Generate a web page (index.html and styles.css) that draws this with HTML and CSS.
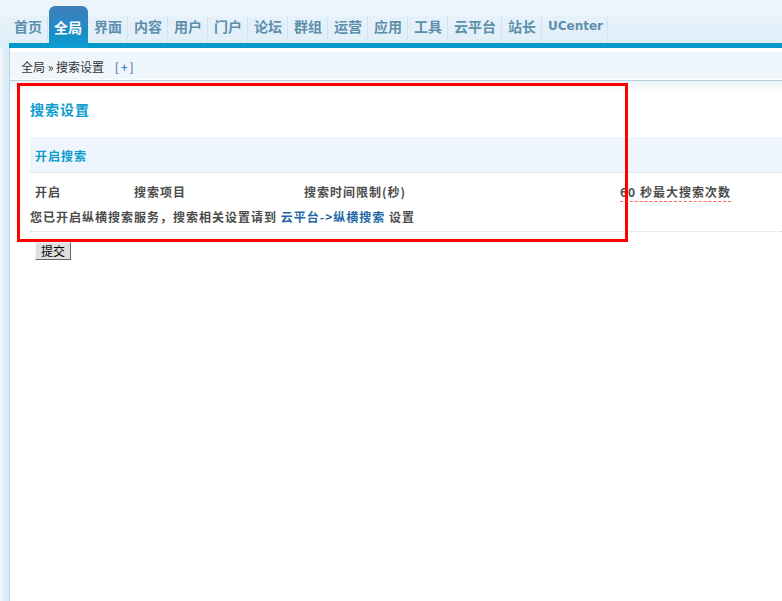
FILE: index.html
```html
<!DOCTYPE html>
<html lang="zh-CN">
<head>
  <meta charset="UTF-8">
  <title>搜索设置</title>
  <link rel="stylesheet" href="styles.css">
</head>
<body>
  <div class="header">
    <ul class="nav">
      <li><a href="#">首页</a></li>
      <li><a href="#" class="on">全局</a></li>
      <li><a href="#">界面</a></li>
      <li><a href="#">内容</a></li>
      <li><a href="#">用户</a></li>
      <li><a href="#">门户</a></li>
      <li><a href="#">论坛</a></li>
      <li><a href="#">群组</a></li>
      <li><a href="#">运营</a></li>
      <li><a href="#">应用</a></li>
      <li><a href="#">工具</a></li>
      <li><a href="#">云平台</a></li>
      <li><a href="#">站长</a></li>
      <li><a href="#" class="latin">UCenter</a></li>
    </ul>
  </div>

  <div class="frame">
    <div class="side"></div>
    <div class="main">
      <div class="crumb">
        全局 &raquo; 搜索设置 <a href="#" class="add">[+]</a>
      </div>

      <div class="content">
        <h3 class="title">搜索设置</h3>

        <div class="tb">
          <div class="tb-head">开启搜索</div>
          <div class="tb-row cols">
            <span>开启</span>
            <span>搜索项目</span>
            <span>搜索时间限制(秒)</span>
            <span><em class="warn">60 秒最大搜索次数</em></span>
          </div>
          <div class="tb-row note">
            您已开启纵横搜索服务，搜索相关设置请到 <a href="#">云平台-&gt;纵横搜索</a> 设置
          </div>
        </div>

        <button class="btn">提交</button>
      </div>

      <!-- 标注框 -->
      <div class="mark"></div>
    </div>
  </div>
</body>
</html>
```

FILE: styles.css
```css
body {
  margin: 0;
  font: 12px "Noto Sans CJK SC", "Liberation Sans", sans-serif;
  color: #333;
  background: #fff;
}

a {
  text-decoration: none;
}

/* 顶部导航 */
.header {
  height: 48px;
  background:
    linear-gradient(#0099cc, #0099cc) 9px 43px / 100% 5px no-repeat,
    linear-gradient(#e0eef8, #e0eef8) 0 43px / 9px 5px no-repeat,
    linear-gradient(#edf5fc 0, #edf5fc 16px, #e6f1fa 17px, #e1eff9 43px);
}

.nav {
  list-style: none;
  margin: 0;
  padding: 0 0 0 8px;
  height: 48px;
  display: flex;
  align-items: flex-end;
}

.nav a {
  display: block;
  height: 21px;
  line-height: 21px;
  padding: 0 5px 6px 6px;
  margin-bottom: 5px;
  border-right: 1px solid #d3e4ef;
  font-size: 14px;
  font-weight: bold;
  color: #5c8fab;
}

.nav a.on {
  height: 31px;
  padding-top: 11px;
  padding-bottom: 0;
  margin-bottom: 0;
  margin-left: 1px;
  padding-left: 5px;
  line-height: 21px;
  border-right-color: transparent;
  color: #fff;
  border-radius: 6px 6px 0 0;
  background: linear-gradient(#3f7fbc, #1d8cc6 60%, #0aa0d2);
}

.nav a.latin {
  font-family: "DejaVu Sans", sans-serif;
  font-size: 12px;
  padding-right: 4px;
}

/* 主体 */
.frame {
  display: flex;
  min-height: 553px;
}

.side {
  width: 9px;
  border-right: 1px solid #b8d1e0;
  background: linear-gradient(90deg, #eef6fc 0, #eef6fc 3px, #dcedf8 3px);
}

.main {
  flex: 1;
  position: relative;
}

.crumb {
  height: 28px;
  line-height: 30px;
  border-top: 4px solid #fff;
  border-bottom: 1px solid #bed1da;
  box-shadow: inset 0 -1px #fbfdfe;
  background: #f0f7fc;
  padding-left: 11px;
  color: #333;
}

.crumb .add {
  color: #2366a8;
  margin-left: 8px;
  letter-spacing: 2px;
}

.content {
  padding: 0 0 0 20px;
  background: linear-gradient(#eaf3f8, #fff 12px) no-repeat;
}

.title {
  margin: 0;
  padding-top: 18px;
  height: 20px;
  line-height: 20px;
  font-size: 14px;
  letter-spacing: 1px;
  color: #0c9ccd;
}

.tb {
  margin-top: 18px;
  font-weight: bold;
  letter-spacing: 1px;
  color: #4c4c4c;
}

.tb-head {
  height: 35px;
  line-height: 37px;
  padding-left: 5px;
  background: #eef5fc;
  border-bottom: 1px solid #dce7f0;
  color: #0c9ccd;
}

.cols {
  display: grid;
  grid-template-columns: 99px 170px 316px 1fr;
  height: 31px;
  line-height: 37px;
}

.cols span {
  padding-left: 5px;
  white-space: nowrap;
}

.warn {
  font-style: normal;
  border-bottom: 1px dashed #f66;
  padding-bottom: 1px;
}

.note {
  height: 27px;
  line-height: 26px;
  border-bottom: 1px dotted #c9dbe6;
}

.note a {
  color: #2366a8;
}

.btn {
  margin: 10px 0 0 5px;
  height: 18px;
  width: 36px;
  padding: 0;
  font: 12px "Noto Sans CJK SC", sans-serif;
  line-height: 14px;
  color: #000;
  background: #e0e0e0;
  border: 1px solid;
  border-color: #f4f4f4 #666 #666 #f4f4f4;
}

/* 红色标注框 */
.mark {
  position: absolute;
  left: 7px;
  top: 35px;
  width: 605px;
  height: 153px;
  border: 3px solid #f00;
  pointer-events: none;
}
```
